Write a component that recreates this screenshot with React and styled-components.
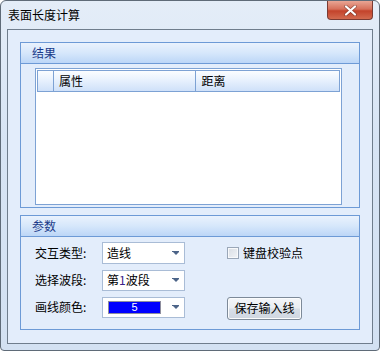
import React from 'react';
import styled, { createGlobalStyle } from 'styled-components';

const GlobalStyle = createGlobalStyle`
    html, body {
        margin: 0;
        padding: 0;
        background: #ffffff;
    }
    * {
        box-sizing: border-box;
    }
`

const Window = styled.div`
    width: 380px;
    height: 351px;
    display: flex;
    flex-direction: column;
    border: 1px solid #5f6b78;
    border-radius: 6px 6px 4px 4px;
    background: linear-gradient(180deg, #e4edf8 0%, #d7e4f4 40%, #d3e1f2 100%);
    font-family: "Noto Sans CJK SC", "Liberation Sans", sans-serif;
    font-size: 12px;
    color: #000;
    overflow: hidden;
`

const TitleBar = styled.div`
    height: 28px;
    display: flex;
    align-items: flex-start;
    justify-content: space-between;
    padding-left: 7px;
`

const Title = styled.div`
    margin-top: 6px;
    font-size: 12px;
    line-height: 16px;
`

const CloseButton = styled.div`
    width: 46px;
    height: 19px;
    margin-right: 6px;
    border: 1px solid #7a3b33;
    border-top: none;
    border-radius: 0 0 4px 4px;
    background: linear-gradient(180deg, #e9a594 0%, #d6705a 45%, #c3432b 55%, #d26a4f 100%);
    display: flex;
    align-items: center;
    justify-content: center;
`

const Client = styled.div`
    flex: 1;
    margin: 0 6px 6px 6px;
    border: 1px solid #6f7d8c;
    background: #e3edfb;
    padding: 12px 12px 13px 12px;
    display: flex;
    flex-direction: column;
    gap: 7px;
`

const Group = styled.div`
    height: ${p => p.h}px;
    border: 1px solid #6d9ad6;
    display: flex;
    flex-direction: column;
`

const GroupHeader = styled.div`
    height: 21px;
    border-bottom: 1px solid #6d9ad6;
    background: linear-gradient(180deg, #eaf2fd 0%, #d6e7fb 50%, #bcd6f7 100%);
    color: #1b3b8a;
    padding-left: 11px;
    line-height: 20px;
`

const ListBox = styled.div`
    flex: 1;
    margin: 4px 17px 2px 14px;
    border: 1px solid #7da2d4;
    background: #ffffff;
    padding: 1px;
`

const ListHeader = styled.div`
    height: 22px;
    display: flex;
    border: 1px solid #7da2d4;
    border-right: 1px solid #7da2d4;
    background: linear-gradient(180deg, #fbfdff 0%, #e6f0fd 50%, #cfe1f9 100%);
`

const HeaderCell = styled.div`
    width: ${p => p.w}px;
    border-right: ${p => (p.last ? 'none' : '1px solid #7da2d4')};
    padding-left: 5px;
    line-height: 20px;
`

const ParamBody = styled.div`
    display: grid;
    grid-template-columns: 67px 83px 42px auto;
    grid-auto-rows: 22px;
    row-gap: 5px;
    padding: 5px 0 0 14px;
    align-items: center;
`

const Label = styled.div`
    line-height: 16px;
`

const Combo = styled.div`
    height: ${p => p.h || 21}px;
    border: 1px solid #a9bcd6;
    background: #ffffff;
    display: flex;
    align-items: center;
    padding: 0 5px 0 4px;
    gap: 4px;
`

const ComboText = styled.div`
    flex: 1;
    line-height: 16px;
`

const Swatch = styled.div`
    flex: 1;
    height: 13px;
    border: 1px solid #8e8e9e;
    background: #0000ff;
    color: #ffffff;
    font-family: "Liberation Sans", sans-serif;
    font-size: 11px;
    line-height: 11px;
    text-align: center;
    margin-left: 1px;
    margin-right: 7px;
`

const Arrow = styled.div`
    width: 7px;
    height: 4px;
    border-top: 1px solid #4c6488;
    display: flex;
    justify-content: center;
    &::after {
        content: '';
        border-left: 3px solid transparent;
        border-right: 3px solid transparent;
        border-top: 3px solid #4c6488;
    }
`

const CheckRow = styled.div`
    display: flex;
    align-items: center;
    gap: 4px;
    grid-column: 4;
`

const CheckBox = styled.div`
    width: 12px;
    height: 12px;
    border: 1px solid #9aa7b8;
    background: linear-gradient(135deg, #d8dde4 0%, #f2f4f7 100%);
    box-shadow: inset 0 0 0 1px #f8f9fb;
`

const Button = styled.div`
    grid-column: 4;
    justify-self: start;
    width: 75px;
    height: 23px;
    margin-top: 2px;
    border: 1px solid #7d8a99;
    border-radius: 3px;
    background: linear-gradient(180deg, #f4f6f9 0%, #e9edf2 48%, #d8dfe8 52%, #cfd6e0 100%);
    box-shadow: inset 0 0 0 1px #fbfcfd;
    text-align: center;
    line-height: 20px;
`

const Spacer = styled.div``

function DropArrow() {
    return <Arrow />
}

export default function App() {
    return (
        <>
            <GlobalStyle />
            <Window>
                <TitleBar>
                    <Title>表面长度计算</Title>
                    <CloseButton>
                        <svg width="13" height="11" viewBox="0 0 13 11">
                            <path d="M2 1.5 L11 9.5 M11 1.5 L2 9.5" stroke="#5a2a22" strokeWidth="3.6" strokeLinecap="round" opacity="0.55" />
                            <path d="M2 1.5 L11 9.5 M11 1.5 L2 9.5" stroke="#ffffff" strokeWidth="2.2" strokeLinecap="round" />
                        </svg>
                    </CloseButton>
                </TitleBar>
                <Client>
                    <Group h={166}>
                        <GroupHeader>结果</GroupHeader>
                        <ListBox>
                            <ListHeader>
                                <HeaderCell w={16} />
                                <HeaderCell w={143}>属性</HeaderCell>
                                <HeaderCell w={143} last>距离</HeaderCell>
                            </ListHeader>
                        </ListBox>
                    </Group>
                    <Group h={115}>
                        <GroupHeader>参数</GroupHeader>
                        <ParamBody>
                            <Label>交互类型:</Label>
                            <Combo h={22}>
                                <ComboText>造线</ComboText>
                                <DropArrow />
                            </Combo>
                            <Spacer />
                            <CheckRow>
                                <CheckBox />
                                <Label>键盘校验点</Label>
                            </CheckRow>

                            <Label>选择波段:</Label>
                            <Combo>
                                <ComboText>第<span style={{ color: '#3a1f8a' }}>1</span>波段</ComboText>
                                <DropArrow />
                            </Combo>
                            <Spacer />
                            <Spacer />

                            <Label>画线颜色:</Label>
                            <Combo>
                                <Swatch>5</Swatch>
                                <DropArrow />
                            </Combo>
                            <Spacer />
                            <Button>保存输入线</Button>
                        </ParamBody>
                    </Group>
                </Client>
            </Window>
        </>
    )
}
